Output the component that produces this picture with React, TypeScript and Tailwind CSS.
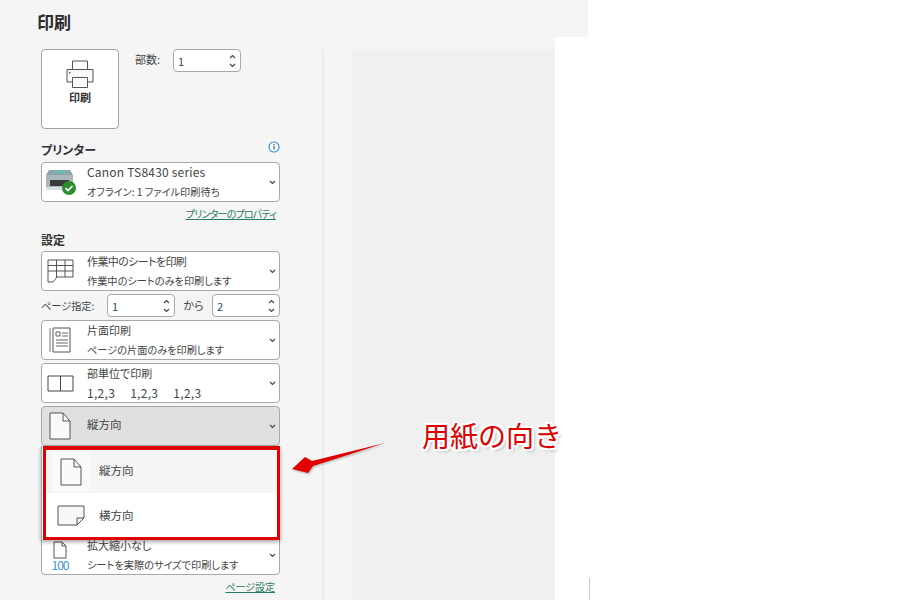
import React from "react";

const F = "font-['Noto_Sans_CJK_JP','Noto_Sans',sans-serif] [font-feature-settings:'palt']";

function Chevron({ className = "" }: { className?: string }) {
  return (
    <svg width="7" height="5" viewBox="0 0 7 5" className={className}>
      <path d="M1 1l2.500 2.500L6 1" fill="none" stroke="#444" strokeWidth="1.100" />
    </svg>
  );
}

function Spin({ value, w }: { value: string; w: string }) {
  return (
    <div className={`${w} h-[23px] bg-white border border-[#a8a8a8] rounded-[4px] flex items-center justify-between pl-[4px] pr-[4px]`}>
      <span className="text-[11px] text-[#2f4a60] mt-[2px]">{value}</span>
      <div className="flex flex-col gap-[4px]">
        <Chevron className="rotate-180" />
        <Chevron />
      </div>
    </div>
  );
}

function Select({
  icon,
  l1,
  l2,
  active,
}: {
  icon: React.ReactNode;
  l1: React.ReactNode;
  l2?: React.ReactNode;
  active?: boolean;
}) {
  return (
    <div className={`h-[40px] w-[239px] shrink-0 rounded-[4px] border border-[#a8a8a8] flex items-center ${active ? "bg-[#e0e0e0]" : "bg-white"}`}>
      <div className="w-[36px] mr-[9px] shrink-0 flex justify-center">{icon}</div>
      <div className={`flex-1 flex flex-col gap-[4px] leading-[16px] text-[#444] whitespace-nowrap ${active ? "-mt-[5px] text-[11.500px]" : "-mt-[1px] text-[11px]"}`}>
        <span>{l1}</span>
        {l2 && <span className="text-[10.200px]">{l2}</span>}
      </div>
      <Chevron className="mr-[3px] mt-[1px]" />
    </div>
  );
}

function PortraitIcon() {
  return (
    <svg width="22" height="28" viewBox="0 0 22 28">
      <path d="M1 1h13l7 8v18H1z" fill="#fafafa" stroke="#555" strokeWidth="1" />
      <path d="M14 1v8h7" fill="none" stroke="#555" strokeWidth="1" />
    </svg>
  );
}

export default function App() {
  return (
    <div className={`relative w-[919px] h-[600px] overflow-hidden bg-white flex flex-col ${F}`}>
      <div className="w-[588px] h-[37px] shrink-0 bg-[#f5f5f5] pl-[37px] pt-[10px]">
        <h1 className="text-[17px] leading-[24px] font-bold text-[#2b2b2b]">印刷</h1>
      </div>
      <div className="w-[555px] flex-1 min-h-0 bg-[#f5f5f5] flex">
        <div className="w-[322px] shrink-0 pl-[41px] pt-[12px] flex flex-col">
          <div className="flex h-[80px] shrink-0">
            <div className="w-[78px] h-[80px] bg-white border border-[#a0a0a0] rounded-[4px] flex flex-col items-center pt-[10px]">
              <svg width="28" height="28" viewBox="0 0 28 28">
                <path d="M6.500 9V1h15v8" fill="#fff" stroke="#555" />
                <path d="M6 22H1V9.500h26V22h-5" fill="#fafafa" stroke="#555" />
                <path d="M6.500 17.500h15v10h-15z" fill="#fff" stroke="#555" />
                <rect x="3" y="12" width="1.500" height="1.500" fill="#555" />
              </svg>
              <span className="text-[11px] leading-[16px] font-bold text-[#333] mt-[1px]">印刷</span>
            </div>
            <span className="ml-[16px] mt-[1px] text-[11px] leading-[18px] text-[#444] whitespace-nowrap">部数:</span>
            <div className="ml-[13px]">
              <Spin value="1" w="w-[68px]" />
            </div>
          </div>
          <div className="relative w-[239px] h-[33px] shrink-0">
            <span className="absolute left-0 top-[11px] text-[12px] leading-[19px] font-bold text-[#333]">プリンター</span>
            <svg width="12" height="12" viewBox="0 0 12 12" className="absolute right-0 top-[12px]">
              <circle cx="6" cy="6" r="5" fill="#fff" stroke="#2b88d8" strokeWidth="1.100" />
              <path d="M6 5v3.500M6 3v1.200" stroke="#2b6ca8" strokeWidth="1.300" />
            </svg>
          </div>
          <Select
            icon={
              <div className="relative w-[30px] h-[26px]">
                <svg width="30" height="24" viewBox="0 0 30 24">
                  <path d="M4 1h21l3 5H1z" fill="#8fa2a6" />
                  <rect x="10" y="2" width="10" height="2" fill="#52c8b0" />
                  <rect x="1" y="6" width="27" height="13" fill="#a8b7ba" />
                  <rect x="5" y="11" width="19" height="6" fill="#3a3a3a" />
                  <rect x="1" y="18" width="27" height="3" fill="#d9dfe0" />
                </svg>
                <svg width="14" height="14" viewBox="0 0 14 14" className="absolute -right-[1px] bottom-0">
                  <circle cx="7" cy="7" r="7" fill="#2e8b2e" />
                  <path d="M3.500 7l2.500 2.500 4.500-4.500" fill="none" stroke="#fff" strokeWidth="1.600" />
                </svg>
              </div>
            }
            l1={<span className="text-[12px] tracking-[0.2px]">Canon TS8430 series</span>}
            l2="オフライン: 1 ファイル印刷待ち"
          />
          <div className="w-[235px] h-[24px] shrink-0 flex justify-end items-center">
            <span className="text-[10px] tracking-[-0.800px] leading-[16px] text-[#2a7d5a] underline whitespace-nowrap">プリンターのプロパティ</span>
          </div>
          <div className="h-[25px] shrink-0 flex items-end">
            <span className="text-[12px] leading-[18px] font-bold text-[#333] mb-[2px]">設定</span>
          </div>
          <Select
            icon={
              <svg width="27" height="25" viewBox="0 0 27 25">
                <path d="M1 1h25v17H10l-4 5H1zM1 6.500h25M1 12h25M9.500 1v17M18 1v17" fill="#fff" stroke="#555" />
              </svg>
            }
            l1={<span className="tracking-[-0.600px]">作業中のシートを印刷</span>}
            l2="作業中のシートのみを印刷します"
          />
          <div className="h-[29px] w-[239px] shrink-0 flex items-center whitespace-nowrap">
            <span className="w-[66px] shrink-0 text-[10.200px] text-[#444]">ページ指定:</span>
            <Spin value="1" w="w-[68px] shrink-0" />
            <span className="w-[37px] shrink-0 text-center text-[11px] text-[#444]">から</span>
            <Spin value="2" w="w-[68px] shrink-0" />
          </div>
          <Select
            icon={
              <svg width="22" height="28" viewBox="0 0 22 28">
                <path d="M1 2v24" stroke="#777" fill="none" />
                <path d="M4 2h17v24H4z" fill="#fff" stroke="#555" />
                <path d="M7 6h4v4H7z" fill="none" stroke="#666" />
                <path d="M13 7h6M13 10h6M7 14h12M7 17h12M7 20h12" stroke="#666" />
              </svg>
            }
            l1="片面印刷"
            l2="ページの片面のみを印刷します"
          />
          <div className="mt-[3px]">
            <Select
              icon={
                <svg width="27" height="17" viewBox="0 0 27 17">
                  <path d="M1 1h12.500v15H1zM13.500 1H26v15H13.500z" fill="#fff" stroke="#444" />
                </svg>
              }
              l1="部単位で印刷"
              l2={
                <span className="flex gap-[15px] text-[12px] tracking-[0.300px]">
                  <span>1,2,3</span>
                  <span>1,2,3</span>
                  <span>1,2,3</span>
                </span>
              }
            />
          </div>
          <div className="mt-[3px]">
            <Select active icon={<PortraitIcon />} l1="縦方向" />
          </div>
          <div className="mt-[89px]">
            <Select
              icon={
                <div className="flex flex-col items-center">
                  <svg width="14" height="18" viewBox="0 0 14 18">
                    <path d="M1 1h8l4 4v12H1zM9 1v4h4" fill="#fff" stroke="#555" />
                  </svg>
                  <span className="text-[12px] leading-[11px] text-[#3a96dd] tracking-[-1px]">100</span>
                </div>
              }
              l1="拡大縮小なし"
              l2="シートを実際のサイズで印刷します"
            />
          </div>
          <div className="w-[234px] h-[24px] shrink-0 flex justify-end items-center">
            <span className="text-[10px] leading-[16px] text-[#2a7d5a] underline whitespace-nowrap">ページ設定</span>
          </div>
        </div>
        <div className="w-[2px] shrink-0 mt-[12px] bg-[#ebebeb]" />
        <div className="w-[28px] shrink-0" />
        <div className="flex-1 mt-[12px] bg-[#f0f0f0]" />
      </div>

      <div className="absolute left-[589px] top-[578px] w-px h-[22px] bg-[#c8c8c8]" />

      <div className="absolute left-[41px] top-[446px] w-[239px] h-[94px] bg-white border-l border-[#a8a8a8] pl-[1px] shadow-[0_2px_4px_rgba(0,0,0,0.35)]">
        <div className="h-full border-[3px] border-t-[4px] border-[#e00000] flex flex-col">
          <div className="h-[43px] shrink-0 bg-[#f5f5f5] flex items-center">
            <div className="ml-[6px] w-[38px] h-[39px] bg-[#fafafa] flex items-center justify-center">
              <PortraitIcon />
            </div>
            <span className="ml-[9px] -mt-[2px] text-[11.500px] text-[#444]">縦方向</span>
          </div>
          <div className="flex-1 flex items-center">
            <svg width="28" height="21" viewBox="0 0 28 21" className="ml-[11px]">
              <path d="M1 1h26v12l-7 7H1z" fill="#f8f8f8" stroke="#555" />
              <path d="M27 13h-7v7" fill="none" stroke="#555" />
            </svg>
            <span className="ml-[14px] mt-[2px] text-[11.500px] text-[#444]">横方向</span>
          </div>
        </div>
      </div>

      <svg width="100" height="36" viewBox="0 0 100 36" className="absolute left-[289px] top-[441px] drop-shadow-[1px_1px_1px_rgba(0,0,0,0.3)]">
        <path d="M3 28L16 16l7 4L96 2 24 25l-5 7z" fill="#e00000" />
      </svg>

      <span className="absolute left-[422px] top-[417px] text-[28px] leading-[36px] text-[#e00000] whitespace-nowrap [font-feature-settings:normal] [text-shadow:2px_0_0_#fff,-2px_0_0_#fff,0_2px_0_#fff,0_-2px_0_#fff,2px_2px_0_#fff,-2px_-2px_0_#fff,2px_-2px_0_#fff,-2px_2px_0_#fff,3px_3px_3px_#bbb]">
        用紙の向き
      </span>
    </div>
  );
}
